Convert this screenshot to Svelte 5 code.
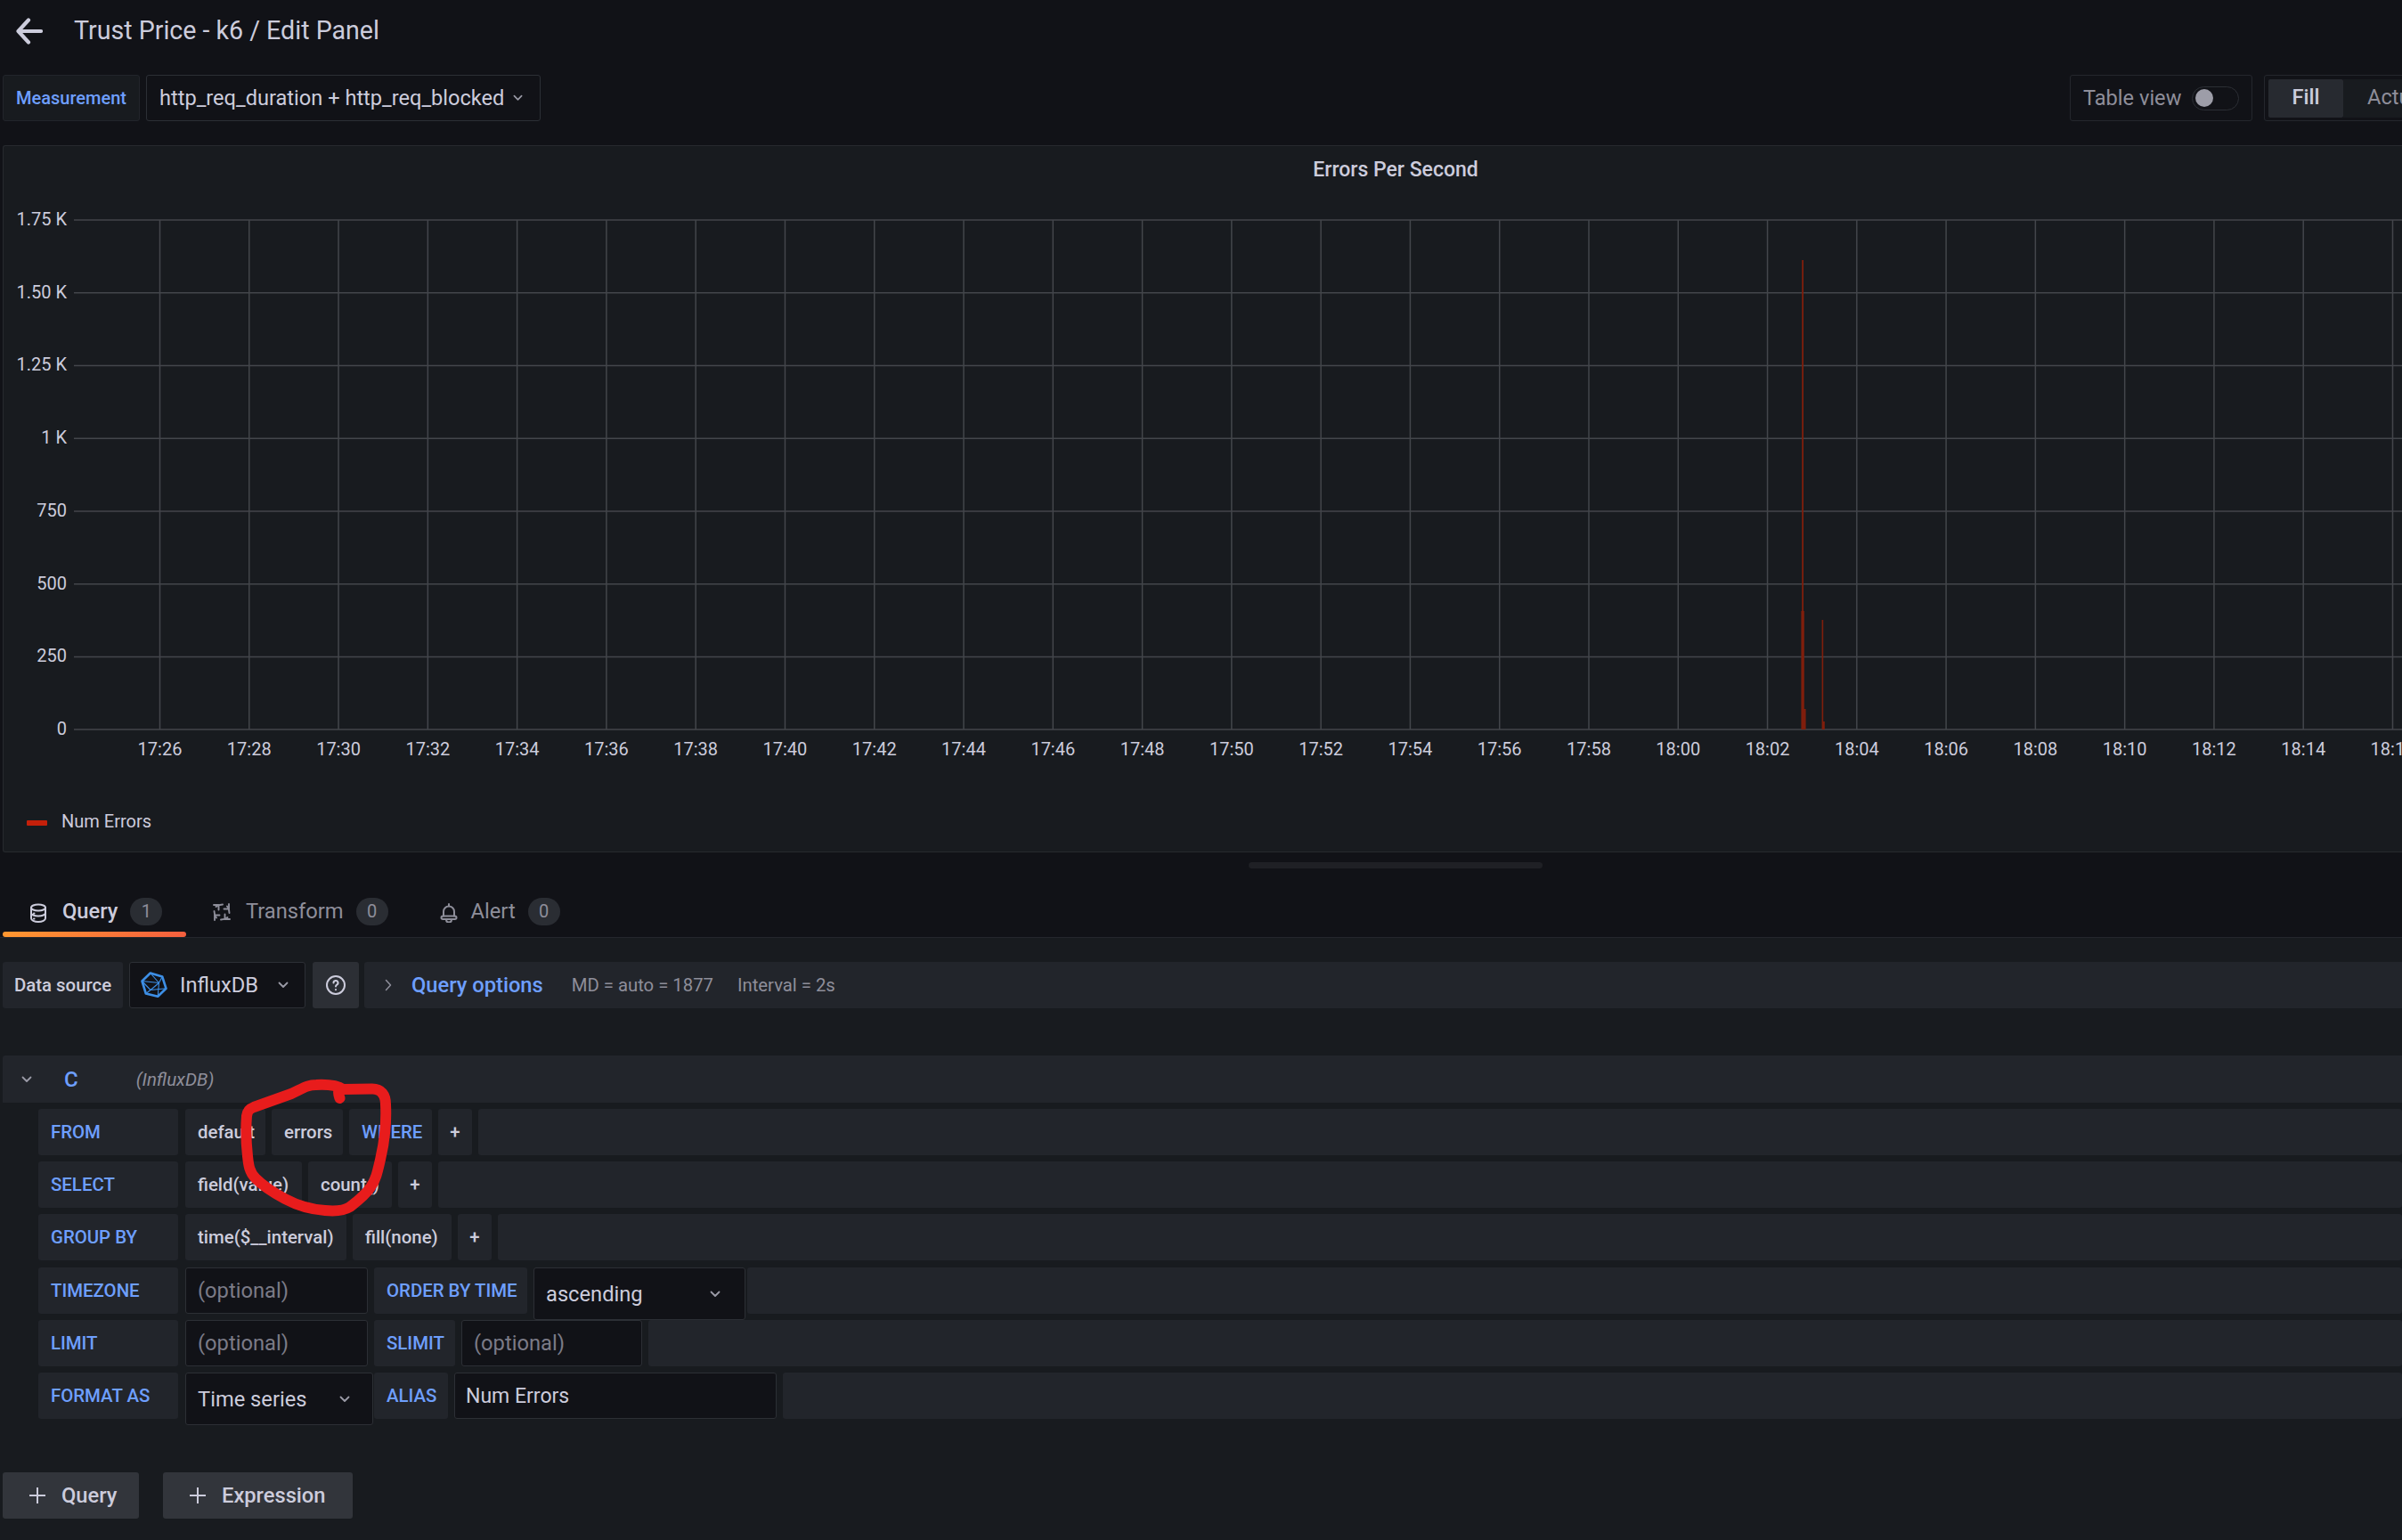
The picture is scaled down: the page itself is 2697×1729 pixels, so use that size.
<script>
  const yTicks = [
    ['1.75 K', 247], ['1.50 K', 328.7], ['1.25 K', 410.4], ['1 K', 492.2],
    ['750', 574], ['500', 655.7], ['250', 737.4], ['0', 819]
  ];
  const xTicks = [];
  for (let i = 0; i < 26; i++) {
    const total = 17 * 60 + 26 + i * 2;
    const mm = String(total % 60).padStart(2, '0');
    xTicks.push({ x: 179.5 + i * 100.28, label: `${Math.floor(total / 60)}:${mm}` });
  }
  const spikes = [
    [2023.2, 292, 1.8], [2022.4, 686, 3.4], [2025, 796, 2.6], [2045.6, 696, 1.6], [2046, 810, 2.8]
  ];
</script>

<div class="page">
  <header class="title-row">
    <svg class="back" viewBox="0 0 30 30" width="30" height="30" fill="none" stroke="#ccccdc" stroke-width="4.200" stroke-linecap="round" stroke-linejoin="round">
      <path d="M28 15H3M14 2.500 2.500 15 14 27.500" />
    </svg>
    <h1>Trust Price - k6 / Edit Panel</h1>
  </header>

  <div class="toolbar">
    <div class="measure-label">Measurement</div>
    <div class="measure-value">
      http_req_duration + http_req_blocked
      <svg class="chev" viewBox="0 0 12 8" width="11" height="8"><path d="M1.500 1.500 6 6l4.500-4.500" /></svg>
    </div>
    <div class="spacer"></div>
    <div class="table-view">
      <span>Table view</span>
      <div class="toggle"><i></i></div>
    </div>
    <div class="radio">
      <div class="radio-item active">Fill</div>
      <div class="radio-item">Actual</div>
    </div>
  </div>

  <section class="panel">
    <div class="panel-title">Errors Per Second</div>
    <svg class="chart" viewBox="0 163 2697 700" width="2697" height="700">
      {#each yTicks as t}
        <line class="grid" x1="83" x2="2697" y1={t[1]} y2={t[1]} />
        <text class="tick" x="75" y={t[1] + 6} text-anchor="end">{t[0]}</text>
      {/each}
      {#each xTicks as t}
        <line class="grid" x1={t.x} x2={t.x} y1="247" y2="819" />
        <text class="tick" x={t.x} y="848" text-anchor="middle">{t.label}</text>
      {/each}
      {#each spikes as s}
        <rect x={s[0]} y={s[1]} width={s[2]} height={819 - s[1]} fill="#7f1e0c" />
      {/each}
    </svg>
    <div class="legend">
      <span class="swatch"></span>
      <span>Num Errors</span>
    </div>
  </section>

  <div class="resize-row"><div class="handle"></div></div>

  <nav class="tabs">
    <div class="tab active">
      <svg class="ic-db" viewBox="0 0 20 22" width="20" height="22" fill="none" stroke="#ccccdc" stroke-width="2" stroke-linecap="round">
        <ellipse cx="10" cy="5" rx="8" ry="3.500" />
        <path d="M2 5v12c0 2.200 3.600 4 8 4s8-1.800 8-4V5M2 11c0 2 3.600 3.500 8 3.500s8-1.500 8-3.500M5 11.500h.5M5 17.500h.5" />
      </svg>
      <span class="tab-text">Query</span>
      <span class="badge">1</span>
    </div>
    <div class="tab">
      <svg class="ic-tr" viewBox="0 0 24 24" width="24" height="24" fill="none" stroke="#8e8e9a" stroke-width="1.900" stroke-linecap="round" stroke-linejoin="round">
        {#each [0, 90, 180, 270] as a}
          <g transform="rotate({a} 12 12)">
            <path d="M5.500 6Q8.500 3.500 13 3.500M20 3V8.500H14.500" />
          </g>
        {/each}
      </svg>
      <span class="tab-text">Transform</span>
      <span class="badge">0</span>
    </div>
    <div class="tab">
      <svg class="ic-bell" viewBox="0 0 20 22" width="20" height="22" fill="none" stroke="#8e8e9a" stroke-width="2" stroke-linejoin="round" stroke-linecap="round">
        <path d="M10 1v2.500M4 14.500V9.500a6 6 0 0 1 12 0v5" />
        <rect x="1.500" y="14.500" width="17" height="3.500" rx="1.750" />
        <path d="M7 18.500a3 3 0 0 0 6 0" />
      </svg>
      <span class="tab-text">Alert</span>
      <span class="badge">0</span>
    </div>
  </nav>

  <main class="editor">
    <div class="ds-row">
      <div class="seg ds-label">Data source</div>
      <div class="ds-select">
        <svg class="influx" viewBox="-1.500 -1.500 30 30" width="30" height="30" fill="none" stroke="#3d8fe6" stroke-width="2.600" stroke-linejoin="round">
          <path d="M9.300 0 22.700 4 27 17.300 17.700 26.300 4.300 23 0 9z" />
          <path d="M0 9 19 11 22.700 4M9.300 0 19 11 17.700 26.300M19 11 9.500 19 27 17.300M0 9 9.500 19 4.300 23" stroke-width="1.100" />
        </svg>
        <span class="ds-name">InfluxDB</span>
        <svg class="chev" viewBox="0 0 12 8" width="12" height="8"><path d="M1.500 1.500 6 6l4.500-4.500" /></svg>
      </div>
      <div class="help">
        <svg viewBox="0 0 24 24" width="24" height="24" fill="none" stroke="#ccccdc" stroke-width="2" stroke-linecap="round">
          <circle cx="12" cy="12" r="10" />
          <path d="M9.500 9.500a2.500 2.500 0 1 1 3.700 2.200c-.8.500-1.200 1-1.200 1.800M12 17v.2" />
        </svg>
      </div>
      <div class="options">
        <svg class="chev-right" viewBox="0 0 8 14" width="8" height="14"><path d="M1.500 1.500 6.500 7l-5 5.500" /></svg>
        <span class="options-title">Query options</span>
        <span class="meta first">MD = auto = 1877</span>
        <span class="meta">Interval = 2s</span>
      </div>
    </div>

    <div class="query-head">
      <svg class="chev" viewBox="0 0 12 8" width="12" height="8"><path d="M1.500 1.500 6 6l4.500-4.500" /></svg>
      <span class="ref">C</span>
      <span class="ds-italic">(InfluxDB)</span>
    </div>

    <div class="rows">
      <div class="row">
        <div class="seg key">FROM</div>
        <div class="seg w90">default</div>
        <div class="seg w80">errors</div>
        <div class="seg blue w93">WHERE</div>
        <div class="seg plus">+</div>
        <div class="seg fill"></div>
      </div>
      <div class="row">
        <div class="seg key">SELECT</div>
        <div class="seg w131">field(value)</div>
        <div class="seg w94">count()</div>
        <div class="seg plus">+</div>
        <div class="seg fill"></div>
      </div>
      <div class="row">
        <div class="seg key">GROUP BY</div>
        <div class="seg w181">time($__interval)</div>
        <div class="seg w111">fill(none)</div>
        <div class="seg plus">+</div>
        <div class="seg fill"></div>
      </div>
      <div class="row">
        <div class="seg key">TIMEZONE</div>
        <div class="field w205">(optional)</div>
        <div class="seg blue w172">ORDER BY TIME</div>
        <div class="field tall asc">ascending
          <svg class="chev" viewBox="0 0 12 8" width="12" height="8"><path d="M1.500 1.500 6 6l4.500-4.500" /></svg>
        </div>
        <div class="seg fill"></div>
      </div>
      <div class="row">
        <div class="seg key">LIMIT</div>
        <div class="field w205">(optional)</div>
        <div class="seg blue w91">SLIMIT</div>
        <div class="field w204">(optional)</div>
        <div class="seg fill"></div>
      </div>
      <div class="row">
        <div class="seg key">FORMAT AS</div>
        <div class="field tall series">Time series
          <svg class="chev" viewBox="0 0 12 8" width="12" height="8"><path d="M1.500 1.500 6 6l4.500-4.500" /></svg>
        </div>
        <div class="seg blue w83">ALIAS</div>
        <div class="field value w362">Num Errors</div>
        <div class="seg fill"></div>
      </div>
    </div>

    <div class="actions">
      <button class="add add-query">
        <svg viewBox="0 0 18 18" width="18" height="18" stroke="#ccccdc" stroke-width="2"><path d="M9 0v18M0 9h18" /></svg>
        Query
      </button>
      <button class="add add-expr">
        <svg viewBox="0 0 18 18" width="18" height="18" stroke="#ccccdc" stroke-width="2"><path d="M9 0v18M0 9h18" /></svg>
        Expression
      </button>
    </div>
  </main>

  <!-- hand drawn annotation on top of the screenshot -->
  <svg class="scribble" viewBox="0 0 2697 1729" width="2697" height="1729" fill="none">
    <path d="M381.500 1233C380 1228 378 1224 385 1223L418 1222.500C428 1222.500 433 1229 433 1240C434 1260 431 1285 427 1302C424 1315 422 1325 416 1333C410 1342 402 1348 393 1355C385 1360 375 1360 365 1359C350 1358 335 1354 320 1346C305 1338 295 1331 287 1323C280 1316 279 1308 278 1298C276 1280 276 1265 277 1253C278 1247 280 1245 285 1243L327 1228C340 1222 345 1218 355 1218C365 1217.500 378 1218 385 1223" stroke="#e81c1c" stroke-width="12" stroke-linecap="round" stroke-linejoin="round" />
  </svg>
</div>

<style>
  :global(body) { margin: 0; background: #111217; }
  .page { position: relative; width: 2697px; height: 1729px; overflow: hidden; background: #111217; color: #ccccdc; font-family: Roboto, "Liberation Sans", sans-serif; }

  .title-row { height: 84px; display: flex; align-items: flex-start; padding-left: 18px; box-sizing: border-box; }
  .back { margin-top: 20px; }
  h1 { margin: 14px 0 0 35px; font-size: 28.600px; line-height: 40px; font-weight: 400; }

  .toolbar { height: 52px; display: flex; padding-left: 3px; gap: 7px; font-size: 23.600px; }
  .measure-label { width: 154px; box-sizing: border-box; background: #181b1f; border: 1px solid #22252b; border-radius: 3px; color: #6e9fff; font-size: 20px; font-weight: 500; display: flex; align-items: center; justify-content: center; }
  .measure-value { width: 443px; box-sizing: border-box; border: 1px solid #2c2f35; border-radius: 3px; padding-left: 14px; display: flex; align-items: center; gap: 10px; }
  .spacer { flex: 1; }
  .table-view { flex: none; width: 205px; box-sizing: border-box; border: 1px solid #24272d; border-radius: 3px; color: #8e8e9a; padding-left: 14px; display: flex; align-items: center; gap: 12px; }
  .toggle { position: relative; width: 53px; height: 27px; box-sizing: border-box; border: 1px solid #2c2f35; border-radius: 14px; }
  .toggle i { position: absolute; left: 3px; top: 2.500px; width: 20px; height: 20px; border-radius: 50%; background: #9d9da8; }
  .radio { flex: none; width: 200px; margin-left: 6px; margin-right: -45px; box-sizing: border-box; border: 1px solid #24272d; border-radius: 3px; padding: 4px; display: flex; align-self: stretch; }
  .radio-item { flex: none; width: 84px; height: 43px; line-height: 41px; text-align: center; color: #8e8e9a; background: #181b1f; }
  .radio-item:last-child { width: 110px; text-align: left; padding-left: 27px; box-sizing: border-box; }
  .radio-item.active { background: #272a30; color: #ccccdc; font-weight: 500; border-radius: 2px; }

  .panel { position: relative; margin: 27px 0 0 3px; height: 794px; box-sizing: border-box; background: #181b1f; border: 1px solid #272a2e; border-right: 0; border-radius: 3px 0 0 3px; }
  .panel-title { padding-top: 14px; text-align: center; width: 3126px; font-size: 23px; line-height: 26px; font-weight: 500; }
  .chart { position: absolute; left: -4px; top: -1px; }
  .grid { stroke: #43464b; stroke-width: 1.500; }
  .tick { fill: #ccccdc; font-size: 20px; }
  .legend { position: absolute; left: 26px; top: 740px; display: flex; align-items: center; gap: 16px; font-size: 20px; line-height: 36px; }
  .swatch { width: 23px; height: 6px; margin-top: 3px; border-radius: 1px; background: #c4200a; }

  .resize-row { height: 51px; padding-left: 1402px; }
  .handle { position: relative; top: 11px; width: 330px; height: 7px; border-radius: 4px; background: #1f2025; }

  .tabs { height: 44px; padding-left: 3px; display: flex; border-bottom: 1px solid #24272d; font-size: 23.700px; color: #8e8e9a; }
  .tab { height: 44px; display: flex; align-items: flex-start; box-sizing: border-box; padding: 0 30px 0 28px; position: relative; gap: 15px; }
  .ic-db { margin-top: 6px; }
  .ic-tr { margin-top: 4px; }
  .ic-bell { margin-top: 6px; }
  .tab-text { line-height: 30px; }
  .tab.active { color: #ccccdc; font-weight: 500; width: 206px; gap: 17px; padding: 0 0 0 30px; }
  .tab.active .badge { margin-left: -3px; }
  .tab.active::after { content: ""; position: absolute; left: 0; right: 0; bottom: 0; height: 6px; border-radius: 3px; background: linear-gradient(90deg, #ff9830, #f55f3e); }
  .badge { width: 36px; height: 31px; border-radius: 16px; background: #2a2d33; color: #8e8e9a; font-size: 20px; font-weight: 400; line-height: 31px; text-align: center; margin-left: -1px; }

  .editor { background: #181b1f; height: 677px; padding: 27px 0 0 3px; box-sizing: border-box; }
  .seg { background: #22252b; border-radius: 3px; display: flex; align-items: center; padding: 0 0 0 14px; font-size: 20.400px; font-weight: 500; height: 52px; box-sizing: border-box; white-space: nowrap; }
  .ds-row { display: flex; height: 52px; gap: 7px; }
  .ds-label { width: 135px; justify-content: center; padding: 0; }
  .ds-select { width: 198px; box-sizing: border-box; background: #111217; border: 1px solid #2c2f35; border-radius: 3px; display: flex; align-items: center; padding-left: 12px; font-size: 23.700px; }
  .ds-name { margin: 0 22px 0 14px; }
  .chev { fill: none; stroke: #9a9aa6; stroke-width: 1.800; stroke-linecap: round; stroke-linejoin: round; flex: none; }
  .help { width: 52px; margin-left: 1px; background: #2c2f35; border-radius: 3px; display: flex; align-items: center; justify-content: center; }
  .options { flex: 1; margin-left: -1px; background: #22252b; border-radius: 3px 0 0 3px; display: flex; align-items: center; padding-left: 23px; font-size: 20.300px; color: #8e8e9a; }
  .chev-right { fill: none; stroke: #8e8e9a; stroke-width: 1.500; stroke-linecap: round; stroke-linejoin: round; }
  .options-title { margin-left: 22px; color: #6e9fff; font-size: 23.700px; font-weight: 500; }
  .meta { margin-left: 27px; }
  .meta.first { margin-left: 32px; }

  .query-head { margin-top: 53px; height: 53px; background: #22252b; border-radius: 3px 0 0 0; display: flex; align-items: center; padding-left: 21px; font-size: 20.500px; }
  .ref { margin-left: 36px; color: #6e9fff; font-size: 24px; font-weight: 500; }
  .ds-italic { margin-left: 65px; color: #8e8e9a; font-style: italic; }

  .rows { margin: 7px 0 0 40px; display: flex; flex-direction: column; gap: 7.200px; }
  .row { display: flex; height: 52px; gap: 7px; align-items: flex-start; }
  .key { width: 157px; margin-right: 1px; color: #6e9fff; }
  .blue { color: #6e9fff; }
  .plus { padding: 0; width: 38px; justify-content: center; }
  .fill { flex: 1; }
  .w83 { width: 83px; }
  .w80 { width: 80px; }
  .w90 { width: 90px; }
  .w91 { width: 91px; }
  .w93 { width: 93px; }
  .w94 { width: 94px; }
  .w111 { width: 111px; }
  .w131 { width: 131px; }
  .w172 { width: 172px; }
  .w181 { width: 181px; }
  .field { height: 52px; box-sizing: border-box; background: #111217; border: 1px solid #2c2f35; border-radius: 3px; display: flex; align-items: center; padding-left: 13px; font-size: 23.700px; color: #7b7b87; white-space: nowrap; }
  .w205 { width: 205px; }
  .w204 { width: 203px; }
  .w362 { width: 362px; }
  .tall { height: 59px; padding-top: 2px; color: #ccccdc; justify-content: space-between; }
  .asc { width: 238px; margin-right: -5px; padding-right: 27px; }
  .series { width: 211px; margin-right: -6px; padding-right: 25px; }
  .value { color: #ccccdc; padding: 2px 0 0 12px; font-size: 23px; }

  .actions { margin-top: 60px; display: flex; gap: 27px; }
  .add { height: 52px; border: 0; border-radius: 3px; background: #32353b; color: #ccccdc; font: 500 23.700px Roboto, sans-serif; display: flex; align-items: center; gap: 18px; padding: 0 0 0 30px; }
  .add-query { width: 153px; }
  .add-expr { width: 213px; }

  .scribble { position: absolute; left: 0; top: 0; pointer-events: none; }
</style>
